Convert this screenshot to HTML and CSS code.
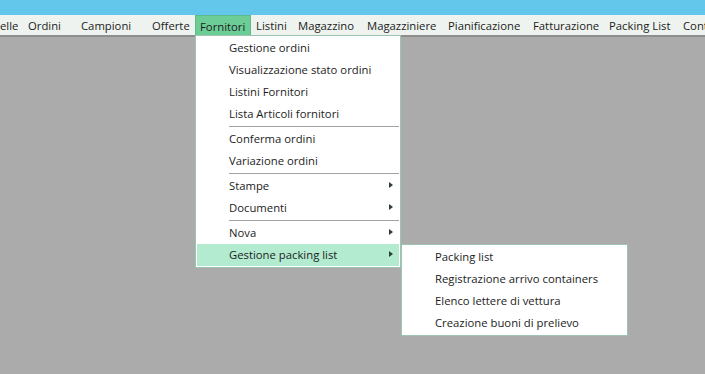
FILE: index.html
```html
<!DOCTYPE html>
<html lang="it">
<head>
<meta charset="utf-8">
<title>Menu Fornitori</title>
<link rel="stylesheet" href="styles.css">
</head>
<body>
<div class="app">
  <div class="titlebar"></div>
  <nav class="menubar">
    <div class="mi mi-tabelle">elle</div>
    <div class="mi mi-ordini">Ordini</div>
    <div class="mi mi-campioni">Campioni</div>
    <div class="mi mi-offerte">Offerte</div>
    <div class="mi mi-fornitori active">Fornitori</div>
    <div class="mi mi-listini">Listini</div>
    <div class="mi mi-magazzino">Magazzino</div>
    <div class="mi mi-magazziniere">Magazziniere</div>
    <div class="mi mi-pianificazione">Pianificazione</div>
    <div class="mi mi-fatturazione">Fatturazione</div>
    <div class="mi mi-packing">Packing List</div>
    <div class="mi mi-contabilita">Contabilità</div>
  </nav>
  <div class="workspace"></div>

  <div class="dropdown">
    <div class="item">Gestione ordini</div>
    <div class="item">Visualizzazione stato ordini</div>
    <div class="item">Listini Fornitori</div>
    <div class="item">Lista Articoli fornitori</div>
    <div class="sep"></div>
    <div class="item">Conferma ordini</div>
    <div class="item">Variazione ordini</div>
    <div class="sep"></div>
    <div class="item sub">Stampe<span class="arrow"></span></div>
    <div class="item sub">Documenti<span class="arrow"></span></div>
    <div class="sep"></div>
    <div class="item sub">Nova<span class="arrow"></span></div>
    <div class="item sub hover">Gestione packing list<span class="arrow"></span></div>
  </div>

  <div class="submenu">
    <div class="item">Packing list</div>
    <div class="item">Registrazione arrivo containers</div>
    <div class="item">Elenco lettere di vettura</div>
    <div class="item">Creazione buoni di prelievo</div>
  </div>
</div>
</body>
</html>
```

FILE: styles.css
```css
* { box-sizing: border-box; }

html, body {
  margin: 0;
  padding: 0;
  width: 705px;
  height: 374px;
  overflow: hidden;
  background: #ababab;
  font-family: "Open Sans", "Noto Sans", sans-serif;
  font-size: 11.3px;
  color: #1c1c1c;
}

.app {
  position: relative;
  width: 705px;
  height: 374px;
  display: flex;
  flex-direction: column;
}

.titlebar {
  height: 15px;
  background: #63c7ec;
  flex-shrink: 0;
}

.menubar {
  height: 22px;
  display: flex;
  align-items: stretch;
  background: #eef3ef;
  border-bottom: 2px solid #8e8e8e;
  overflow: hidden;
  white-space: nowrap;
  flex-shrink: 0;
}

.mi {
  flex-shrink: 0;
  padding-left: 5px;
  display: flex;
  align-items: center;
  height: 20px;
}

.mi-tabelle { width: 23px; padding-left: 0; }
.mi-ordini { width: 53px; }
.mi-campioni { width: 71px; }
.mi-offerte { width: 48px; }
.mi-fornitori { width: 56px; }
.mi-listini { width: 42px; }
.mi-magazzino { width: 69px; }
.mi-magazziniere { width: 81px; }
.mi-pianificazione { width: 85px; }
.mi-fatturazione { width: 76px; }
.mi-packing { width: 74px; }
.mi-contabilita { width: 80px; }

.mi.active {
  background: #6ccd97;
  border: 1px solid #5dbb88;
  border-bottom: none;
  height: 21px;
  padding-left: 4px;
}

.workspace {
  flex: 1;
  background: #ababab;
}

.dropdown {
  position: absolute;
  left: 195px;
  top: 35px;
  width: 206px;
  background: #ffffff;
  border: 1px solid #9cc4b0;
  padding: 1px 1px 1px 1px;
}

.submenu {
  position: absolute;
  left: 401px;
  top: 244px;
  width: 227px;
  background: #ffffff;
  border: 1px solid #9cc4b0;
  padding: 1px;
}

.item {
  height: 22px;
  display: flex;
  align-items: center;
  padding-left: 32px;
  padding-bottom: 2px;
  position: relative;
  white-space: nowrap;
}

.item.hover {
  background: #b3ebd1;
}

.sep {
  height: 1px;
  margin: 1px 0 1px 32px;
  background: #a3a3a3;
}

.arrow {
  position: absolute;
  right: 6px;
  top: 7px;
  width: 0;
  height: 0;
  border-top: 3.5px solid transparent;
  border-bottom: 3.5px solid transparent;
  border-left: 4px solid #2f3f35;
}
```
